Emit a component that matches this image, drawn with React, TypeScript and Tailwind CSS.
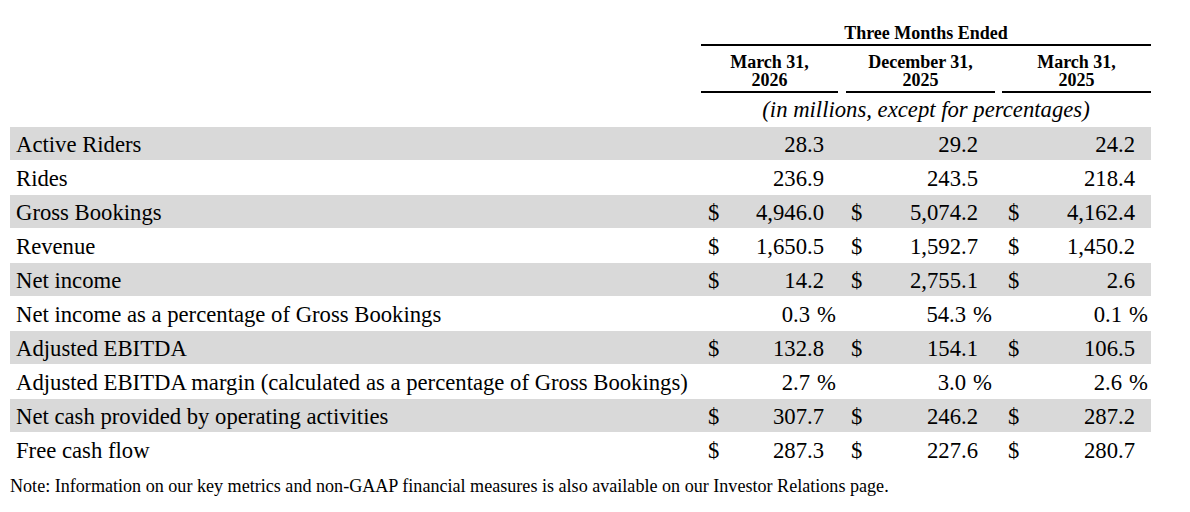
type Cell = { dollar?: boolean; value: string; pct?: boolean };

type Row = {
    label: string;
    shaded: boolean;
    cells: [Cell, Cell, Cell];
};

const rows: Row[] = [
    { label: 'Active Riders', shaded: true, cells: [{ value: '28.3' }, { value: '29.2' }, { value: '24.2' }] },
    { label: 'Rides', shaded: false, cells: [{ value: '236.9' }, { value: '243.5' }, { value: '218.4' }] },
    { label: 'Gross Bookings', shaded: true, cells: [{ dollar: true, value: '4,946.0' }, { dollar: true, value: '5,074.2' }, { dollar: true, value: '4,162.4' }] },
    { label: 'Revenue', shaded: false, cells: [{ dollar: true, value: '1,650.5' }, { dollar: true, value: '1,592.7' }, { dollar: true, value: '1,450.2' }] },
    { label: 'Net income', shaded: true, cells: [{ dollar: true, value: '14.2' }, { dollar: true, value: '2,755.1' }, { dollar: true, value: '2.6' }] },
    { label: 'Net income as a percentage of Gross Bookings', shaded: false, cells: [{ value: '0.3', pct: true }, { value: '54.3', pct: true }, { value: '0.1', pct: true }] },
    { label: 'Adjusted EBITDA', shaded: true, cells: [{ dollar: true, value: '132.8' }, { dollar: true, value: '154.1' }, { dollar: true, value: '106.5' }] },
    { label: 'Adjusted EBITDA margin (calculated as a percentage of Gross Bookings)', shaded: false, cells: [{ value: '2.7', pct: true }, { value: '3.0', pct: true }, { value: '2.6', pct: true }] },
    { label: 'Net cash provided by operating activities', shaded: true, cells: [{ dollar: true, value: '307.7' }, { dollar: true, value: '246.2' }, { dollar: true, value: '287.2' }] },
    { label: 'Free cash flow', shaded: false, cells: [{ dollar: true, value: '287.3' }, { dollar: true, value: '227.6' }, { dollar: true, value: '280.7' }] },
];

// padding per column group: [dollar left, value right, percent right]
const colPad = [
    { dollar: 'pl-[7px]', value: 'pr-[22px]', pct: 'pr-[10px]' },
    { dollar: 'pl-[5px]', value: 'pr-[24px]', pct: 'pr-[10px]' },
    { dollar: 'pl-[6px]', value: 'pr-[16px]', pct: 'pr-[3px]' },
];

const gridCols = 'grid grid-cols-[691px_145px_156px_149px]';

const ValueCell = ({ cell, idx }: { cell: Cell; idx: number }) => {
    const pad = colPad[idx];
    return (
        <div className="flex items-center justify-between">
            <span className={pad.dollar}>{cell.dollar ? '$' : ''}</span>
            {cell.pct ? (
                <span className={pad.pct}>
                    {cell.value}
                    <span className="ml-[7px]">%</span>
                </span>
            ) : (
                <span className={pad.value}>{cell.value}</span>
            )}
        </div>
    );
};

export default function App() {
    return (
        <div
            className="w-[1190px] h-[512px] bg-white text-black pl-[10px] pt-[23px]"
            style={{ fontFamily: '"Liberation Serif", "Times New Roman", serif' }}
        >
            {/* header */}
            <div className="ml-[691px] w-[450px]">
                <div className="text-center font-bold text-[18px] leading-[20px]">Three Months Ended</div>
                <div className="mt-[1px] h-[2px] bg-black" />
                <div className="mt-[7px] grid grid-cols-[145px_156px_149px] font-bold text-[18px] leading-[18px]">
                    <div className="mr-[8px] text-center">March 31,<br />2026</div>
                    <div className="mr-[7px] text-center">December 31,<br />2025</div>
                    <div className="text-center">March 31,<br />2025</div>
                </div>
                <div className="mt-[2px] grid grid-cols-[145px_156px_149px]">
                    <div className="mr-[8px] h-[2px] bg-black" />
                    <div className="mr-[7px] h-[2px] bg-black" />
                    <div className="h-[2px] bg-black" />
                </div>
                <div className="pt-[4px] h-[34px] text-center italic text-[22.7px] leading-[26px]">
                    (in millions, except for percentages)
                </div>
            </div>

            {/* body */}
            <div className="w-[1141px] text-[22.7px] leading-[35px]">
                {rows.map(row => (
                    <div
                        key={row.label}
                        className={`${gridCols} h-[34px] ${row.shaded ? 'bg-[#d9d9d9] border-b border-white' : ''}`}
                    >
                        <div className="pl-[6px] whitespace-nowrap">{row.label}</div>
                        {row.cells.map((c, i) => (
                            <ValueCell key={i} cell={c} idx={i} />
                        ))}
                    </div>
                ))}
            </div>

            <p className="mt-[9px] text-[18.1px] leading-[20px] whitespace-nowrap">
                Note: Information on our key metrics and non-GAAP financial measures is also available on our Investor Relations page.
            </p>
        </div>
    );
}
